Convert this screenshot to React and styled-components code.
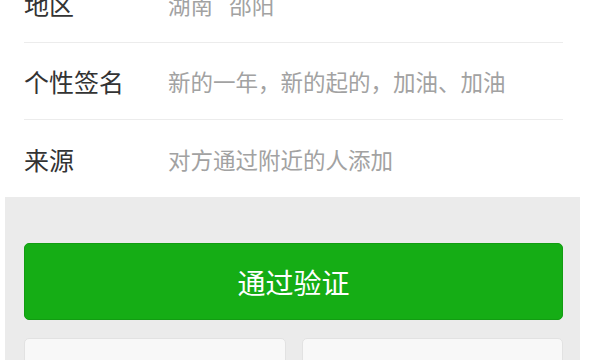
import React from 'react';
import styled, { createGlobalStyle } from 'styled-components';

const GlobalStyle = createGlobalStyle`
  html, body {
    margin: 0;
    padding: 0;
    background: #ffffff;
    overflow: hidden;
  }
  body {
    font-family: "Noto Sans CJK SC", "Noto Sans", sans-serif;
  }
`;

const Page = styled.div`
  width: 575px;
  margin: -34px 0 0 5px;
  height: 394px;
  display: flex;
  flex-direction: column;
  overflow: hidden;
`;

const InfoList = styled.div`
  padding: 0 17px 0 19px;
  background: #ffffff;
`;

const InfoRow = styled.div`
  display: flex;
  align-items: center;
  flex-shrink: 0;
  height: 77px;
  border-bottom: ${(p) => (p.last ? 'none' : '1px solid #ececec')};
  box-sizing: border-box;
`;

const Label = styled.div`
  width: 144px;
  flex-shrink: 0;
  font-size: 25px;
  color: #333333;
`;

const Value = styled.div`
  font-size: 22.5px;
  color: #a2a2a2;
  white-space: pre;
`;

const ActionPanel = styled.div`
  flex: 1;
  min-height: 0;
  background: #ebebeb;
  padding: 46px 17px 0 19px;
  display: flex;
  flex-direction: column;
  gap: 18px;
`;

const PrimaryButton = styled.button`
  flex-shrink: 0;
  height: 77px;
  border: 1px solid #129d12;
  border-radius: 5px;
  background: #15ad15;
  color: #ffffff;
  font-family: inherit;
  font-size: 28px;
  cursor: pointer;
`;

const ButtonRow = styled.div`
  flex-shrink: 0;
  display: grid;
  grid-template-columns: 1fr 1fr;
  gap: 16px;
`;

const PlainButton = styled.button`
  height: 77px;
  border: 1px solid #e2e2e2;
  border-radius: 5px;
  background: #f8f8f8;
  color: #333333;
  font-family: inherit;
  font-size: 26px;
`;

const rows = [
  { label: '地区', value: '湖南\u2002 邵阳' },
  { label: '个性签名', value: '新的一年，新的起的，加油、加油' },
  { label: '来源', value: '对方通过附近的人添加' },
];

const App = () => {
  return (
    <>
      <GlobalStyle />
      <Page>
        <InfoList>
          {rows.map((r, i) => (
            <InfoRow key={r.label} last={i === rows.length - 1}>
              <Label>{r.label}</Label>
              <Value>{r.value}</Value>
            </InfoRow>
          ))}
        </InfoList>
        <ActionPanel>
          <PrimaryButton>通过验证</PrimaryButton>
          <ButtonRow>
            <PlainButton />
            <PlainButton />
          </ButtonRow>
        </ActionPanel>
      </Page>
    </>
  );
};

export default App;
